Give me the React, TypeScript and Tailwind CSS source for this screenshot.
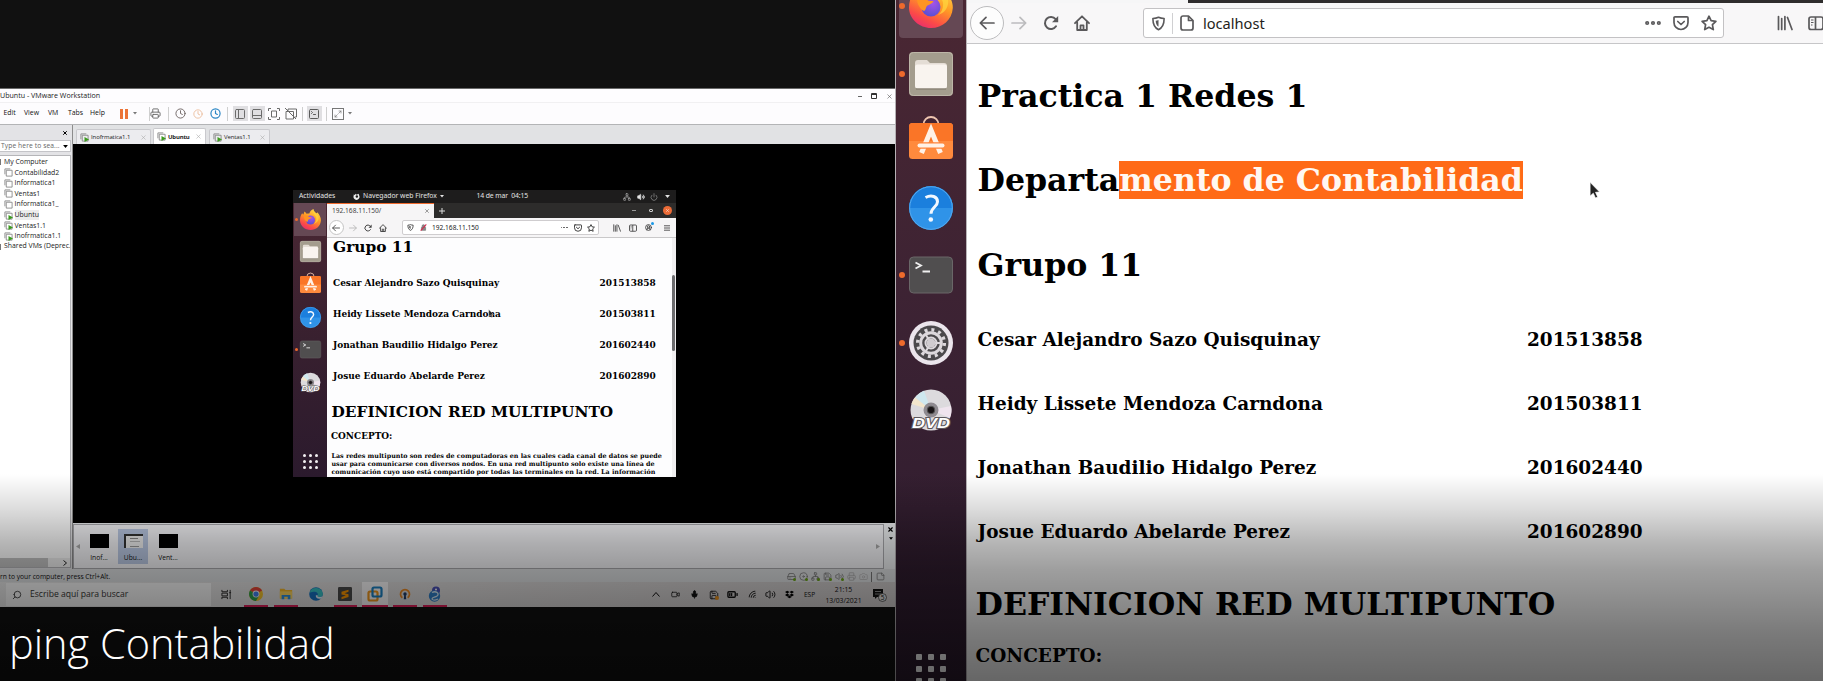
import React from "react";
import {
  AppWindow, BatteryMedium, CircleUserRound, Clock, Ellipsis, Mic, PanelBottom, PanelLeft, Power, Printer,
  Scan, Search, SquareTerminal, Video, Volume2, Wifi, X, Maximize2, HardDrive, Disc, Network, Save, Camera, StickyNote,
} from "lucide-react";
import { FaDropbox } from "react-icons/fa";

type P = { className?: string };

/* ---------- Browser glyphs ---------- */

const ArrowIcon = ({ className = "" }: P) => (
  <svg viewBox="0 0 16 16" className={className} fill="none" stroke="currentColor" strokeWidth="1.7" strokeLinecap="round" strokeLinejoin="round">
    <path d="M15 8H1.5M7 2.3 1.3 8 7 13.7" />
  </svg>
);
const ReloadIcon = ({ className = "" }: P) => (
  <svg viewBox="0 0 16 16" className={className} fill="none" stroke="currentColor" strokeWidth="2" strokeLinecap="round">
    <path d="M13 11.3A6 6 0 1 1 12.6 4.2" />
    <path d="M15.2 1v6.3H9z" fill="currentColor" stroke="none" />
  </svg>
);
const HomeIcon = ({ className = "" }: P) => (
  <svg viewBox="0 0 16 16" className={className} fill="none" stroke="currentColor" strokeWidth="1.8" strokeLinecap="round" strokeLinejoin="round">
    <path d="M1 8.2 8 1.3l7 6.9M3.2 7.5V15h9.6V7.5" />
    <path d="M6.5 15v-4.6h3V15" />
  </svg>
);
const ShieldIcon = ({ className = "" }: P) => (
  <svg viewBox="0 0 16 16" className={className} fill="none" stroke="currentColor" strokeWidth="1.7" strokeLinejoin="round">
    <path d="M8 1.4c2 .9 3.9 1.200 6 1.200 0 5.600-1.300 9.800-6 12C3.300 12.400 2 8.200 2 2.600c2.100 0 4-.3 6-1.200z" />
    <path d="M8 4.300v7.200C5.900 10 5.200 8 5 5c1 0 2-.2 3-.7z" fill="currentColor" stroke="none" />
  </svg>
);
const PageIcon = ({ className = "" }: P) => (
  <svg viewBox="0 0 14 16" className={className} fill="none" stroke="currentColor" strokeWidth="1.7" strokeLinejoin="round">
    <path d="M3 1h5.500L13 5.500V13a2 2 0 0 1-2 2H3a2 2 0 0 1-2-2V3a2 2 0 0 1 2-2z" />
    <path d="M8.500 1v4.500H13" />
  </svg>
);
const PocketIcon = ({ className = "" }: P) => (
  <svg viewBox="0 0 16 16" className={className} fill="none" stroke="currentColor" strokeWidth="1.700" strokeLinecap="round" strokeLinejoin="round">
    <path d="M2 1.800h12a1 1 0 0 1 1 1V7.500a7 7 0 0 1-14 0V2.800a1 1 0 0 1 1-1z" />
    <path d="M4.800 6.500 8 9.500l3.200-3" />
  </svg>
);
const StarIcon = ({ className = "" }: P) => (
  <svg viewBox="0 0 16 16" className={className} fill="none" stroke="currentColor" strokeWidth="1.700" strokeLinejoin="round">
    <path d="m8 1.200 2.100 4.400 4.800.7-3.500 3.400.9 4.900L8 12.300l-4.300 2.300.9-4.900L1.100 6.300l4.800-.7z" />
  </svg>
);
const LibraryIcon = ({ className = "" }: P) => (
  <svg viewBox="0 0 16 16" className={className} fill="none" stroke="currentColor" strokeWidth="1.700" strokeLinecap="round">
    <path d="M1.500 1.500v13M4.700 3.500v11M7.900 1.500v13M10.500 2.500l4.500 12" />
  </svg>
);
const SidebarIcon = ({ className = "" }: P) => (
  <svg viewBox="0 0 16 16" className={className} fill="none" stroke="currentColor" strokeWidth="1.700">
    <rect x="1" y="2" width="14" height="12.500" rx="2" />
    <path d="M7.500 2v12.500" />
    <path d="M3 5h2.500M3 7.500h2.500M3 10h1.500" strokeWidth="1" />
  </svg>
);
const Caret = ({ className = "" }: P) => (
  <svg viewBox="0 0 8 5" className={className}><path d="M0 0h8L4 5z" fill="currentColor" /></svg>
);
const Pointer = ({ className = "" }: P) => (
  <svg viewBox="0 0 10 16" className={className}>
    <path d="M1 1v12.500l2.900-2.600 2 4.400 2-.9-2-4.300 3.700-.3z" fill="#222" stroke="#fff" strokeWidth=".6" />
  </svg>
);

/* ---------- Dock icons ---------- */

const FirefoxIcon = ({ className = "" }: P) => (
  <svg viewBox="0 0 44 44" className={className}>
    <defs>
      <linearGradient id="ffx" x1=".8" y1="0" x2=".3" y2="1">
        <stop offset="0" stopColor="#ffe04a" />
        <stop offset=".45" stopColor="#ff9a25" />
        <stop offset=".8" stopColor="#fb4a48" />
        <stop offset="1" stopColor="#ea2f6c" />
      </linearGradient>
      <radialGradient id="ffxCore" cx=".6" cy=".3" r=".8">
        <stop offset="0" stopColor="#a653e8" />
        <stop offset="1" stopColor="#4f4fd0" />
      </radialGradient>
    </defs>
    <path d="M4.500 9c1 .8 1.700 2 2 3.200 1.500-1.800 2.200-4.600 2.300-7C11 6.500 13 8.500 14 10c2-.6 3.500-.8 5.500-.7C21 5.500 23.500 1.500 28.500 0c-.5 4 3 6 5.500 9 1 .2 2-.5 2-2 5 5 8 11 7.800 17C43 36 33.500 44 22 44S0 35 0 23.500C0 18 1.500 13 4.500 9z" fill="url(#ffx)" />
    <circle cx="22" cy="23" r="9.500" fill="url(#ffxCore)" />
    <path d="M8 15c4-2 9-1 11 1.500 2 .5 4 .4 5.500.7-1 2.500-4 3-6 4.300-2 1.500-1 4-3.500 5.500-4-2-7-7-7-12z" fill="#ff9422" />
    <path d="M28 3c-3 6 5 9 6 16 .6 5-1.500 9.500-5 12 7-2 11-8 10-15C38 10 30 9 28 3z" fill="#ffd43e" opacity=".75" />
  </svg>
);
const FilesIcon = ({ className = "" }: P) => (
  <svg viewBox="0 0 44 44" className={className}>
    <rect width="44" height="44" rx="4" fill="#a49d8e" />
    <rect x=".5" y=".5" width="43" height="43" rx="4" fill="none" stroke="#bdb6a8" />
    <path d="M6 11a3 3 0 0 1 3-3h9l3 3h14a3 3 0 0 1 3 3v5H6z" fill="#e4ddd5" />
    <rect x="6" y="12.500" width="32" height="24" rx="2.500" fill="#f9f4ef" />
    <path d="M7 37h30" stroke="#7f786b" />
  </svg>
);
const SoftwareIcon = ({ className = "" }: P) => (
  <svg viewBox="0 0 44 44" className={className}>
    <path d="M14.500 6.500a7.500 7.500 0 0 1 15 0" transform="translate(0 -1)" fill="none" stroke="#efc5b0" strokeWidth="1.800" />
    <rect y="4" width="44" height="36" rx="3.500" fill="#ff8a3d" />
    <path d="M0 22V7.500A3.500 3.500 0 0 1 3.500 4h37A3.500 3.500 0 0 1 44 7.500V22z" fill="#fa7527" />
    <path d="M12.500 34 22 11l9.500 23" fill="none" stroke="#fff1e6" strokeWidth="5" />
    <path d="M10.500 26.500h23" stroke="#ff8238" strokeWidth="6.500" />
    <path d="M10.500 26.500h23" stroke="#fff1e6" strokeWidth="4" strokeLinecap="round" />
  </svg>
);
const HelpIcon = ({ className = "" }: P) => (
  <svg viewBox="0 0 44 44" className={className} fill="none">
    <circle cx="22" cy="22" r="22" fill="#2f93e8" />
    <path d="M0 22a22 22 0 0 1 44 0z" fill="#1b7fdd" />
    <circle cx="22" cy="22" r="21.300" stroke="#52a8ee" />
    <path d="M16.500 11.500c6-3 12-1 12 4.200 0 5-6.500 5.800-6.500 12" stroke="#f3f8ff" strokeWidth="3" />
    <circle cx="21.800" cy="33.500" r="2.300" fill="#f3f8ff" />
  </svg>
);
const TerminalIcon = ({ className = "" }: P) => (
  <svg viewBox="0 0 44 44" className={className} fill="none">
    <rect x=".5" y="4" width="43" height="36" rx="4" fill="#504e4f" stroke="#6a6768" />
    <path d="m6.500 9.500 5.500 3-5.500 3M13.500 18.500h7.500" stroke="#f0f0f0" strokeWidth="1.800" />
  </svg>
);
const SettingsIcon = ({ className = "" }: P) => (
  <svg viewBox="0 0 44 44" className={className} fill="none">
    <circle cx="22" cy="22" r="22" fill="#ebe5ec" />
    <circle cx="22" cy="22" r="17.500" fill="#4b494c" />
    <circle cx="22" cy="22" r="13.300" stroke="#dcd8dc" strokeWidth="3.500" strokeDasharray="3 3.963" />
    <circle cx="22" cy="22" r="10.300" stroke="#dcd8dc" strokeWidth="3" />
    <circle cx="22" cy="22" r="5.500" stroke="#dcd8dc" strokeWidth="2" />
    <path d="M22 22h9M22 22l-5-8M22 22l-5 8" stroke="#dcd8dc" strokeWidth="2" />
    <circle cx="22" cy="22" r="4.500" fill="#d0ccd0" />
  </svg>
);
const DvdIcon = ({ className = "" }: P) => (
  <svg viewBox="0 0 44 44" className={className}>
    <circle cx="22" cy="22" r="20.500" fill="#dcdadd" />
    <path d="M22 22 6 9.500A20.500 20.500 0 0 1 15 2.800z" fill="#cfe8ef" />
    <path d="M22 22 2.500 16A20.500 20.500 0 0 1 6 9.500z" fill="#f3e6cc" />
    <path d="M22 22 42 18a20.500 20.500 0 0 1-1 12z" fill="#efe4ee" />
    <circle cx="22" cy="22" r="7.500" fill="#8e8a90" />
    <circle cx="22" cy="22" r="3.800" fill="#1a1518" stroke="#555" />
    <text x="22" y="39.500" textAnchor="middle" textLength="38" lengthAdjust="spacingAndGlyphs" fontFamily="Liberation Sans" fontWeight="bold" fontStyle="italic" fontSize="15" fill="#fff" stroke="#5c585c" strokeWidth="2" paintOrder="stroke">DVD</text>
  </svg>
);

/* ---------- Windows taskbar icons ---------- */

const ChromeIcon = () => (
  <svg viewBox="0 0 16 16" className="size-3.5">
    <circle cx="8" cy="8" r="8" fill="#f7c52c" />
    <path d="M8 8 1.100 4A8 8 0 0 1 14.900 4z" fill="#e8453c" />
    <path d="M8 8 1.100 4A8 8 0 0 0 8 16l3.500-6z" fill="#2fa24f" />
    <circle cx="8" cy="8" r="3.900" fill="#fff" /><circle cx="8" cy="8" r="3" fill="#4285f4" />
  </svg>
);
const ExplorerIcon = () => (
  <svg viewBox="0 0 16 16" className="size-3.5">
    <path d="M1 2h5l1.500 1.500H15V13H1z" fill="#f6b92c" /><path d="M1 5h14v8H1z" fill="#ffd75e" />
    <path d="M3 14V9h10v5h-3v-3H6v3z" fill="#2d8fe0" />
  </svg>
);
const EdgeIcon = () => (
  <svg viewBox="0 0 16 16" className="size-3.5">
    <circle cx="8" cy="8" r="7.800" fill="#1673c4" />
    <path d="M.5 7A7.800 7.800 0 0 1 15.800 8c0 2.500-2 3.500-4 3.500S9 10.500 10 9.500C11 7 8 5 5 5.500 3 5.700 1.500 6 .5 7z" fill="#38c4c8" />
    <path d="M10 9.500c-.8 1 0 2 1.800 2s3-.5 4-1.500l-1.500 3c-4 1.500-7-.5-6.500-3.500z" fill="#e6f3fa" />
  </svg>
);
const SublimeIcon = () => (
  <svg viewBox="0 0 16 16" className="size-3.5">
    <rect width="16" height="16" rx="1.500" fill="#4a4a4a" />
    <path d="M12 3 4 5.500v3l5 1.300-5 1.700V14l8-2.700v-3L7.500 7 12 5.500z" fill="#ff9800" />
  </svg>
);
const VmwareIcon = () => (
  <svg viewBox="0 0 16 16" className="size-4" fill="none" strokeWidth="2.200">
    <rect x="1.500" y="5.500" width="9" height="9" rx="1.500" stroke="#f39a1f" />
    <rect x="5.500" y="1.500" width="9" height="9" rx="1.500" stroke="#1c83c6" />
  </svg>
);
const VpnIcon = () => (
  <svg viewBox="0 0 16 16" className="size-3" fill="none">
    <path d="M4.500 13A6 6 0 1 1 11.500 13" stroke="#ee8a22" strokeWidth="2.300" />
    <circle cx="8" cy="8" r="2.300" fill="#1e3a68" /><path d="M7 9h2l.6 6H6.400z" fill="#1e3a68" />
  </svg>
);
const PythonIcon = () => (
  <svg viewBox="0 0 16 16" className="size-4">
    <circle cx="9" cy="4.500" r="4" fill="#4b52b8" /><circle cx="7.500" cy="10" r="5.700" fill="#2f7fc8" />
    <path d="M5 6.500c4-2 8 1 5 3.500-2 1.500-5 1-5 3 1 1.500 4 1 6 0" fill="none" stroke="#d7e8f7" strokeWidth="1.300" />
    <circle cx="9" cy="3.500" r="1" fill="#fff" />
  </svg>
);
const TaskViewIcon = () => (
  <svg viewBox="0 0 12 12" className="size-[11px]" fill="none" stroke="#222" strokeWidth="1">
    <path d="M1 1v2h6V1M1 11V9h6v2M1 4.500h6v3H1zM10 1v10" /><path d="M9 4h2" />
  </svg>
);

/* ---------- Shared pieces ---------- */

const DOCK = [FirefoxIcon, FilesIcon, SoftwareIcon, HelpIcon, TerminalIcon, SettingsIcon, DvdIcon];

function BigDock() {
  const running = [true, true, false, false, true, true, false];
  return (
    <div className="flex h-full w-[70px] shrink-0 flex-col overflow-hidden bg-linear-to-b from-[#4a2733] via-[#3b2233] to-[#2b1a2d]">
      <div className="-mt-[27px] flex flex-col">
        {DOCK.map((Icon, i) => (
          <div key={i} className={"flex h-[67.2px] items-center pl-[3px] " + (i === 0 ? "mx-[3px] !h-[65px] mb-[2.200px] rounded bg-[#654854] !pl-0" : "")}>
            <span className={"size-1.5 shrink-0 rounded-full " + (running[i] ? "bg-[#ee6a2c]" : "")} />
            <Icon className="ml-1 size-11 overflow-visible" />
          </div>
        ))}
      </div>
      <div className="mt-[211px] grid w-[30px] shrink-0 grid-cols-3 gap-1.5 self-center">
        {Array.from({ length: 9 }, (_, i) => <span key={i} className="size-1.5 rounded-[1px] bg-white" />)}
      </div>
    </div>
  );
}

function SmallDock() {
  const icons = [FirefoxIcon, FilesIcon, SoftwareIcon, HelpIcon, TerminalIcon, DvdIcon];
  return (
    <div className="flex h-full w-[34px] shrink-0 flex-col bg-linear-to-b from-[#4a2733] via-[#38202f] to-[#2b1a2d]">
      {icons.map((Icon, i) => (
        <div key={i} className={"flex h-[32.600px] items-center pl-0.5 " + (i === 0 ? "mx-px bg-[#654854] !pl-px" : "")}>
          <span className={"size-[3px] shrink-0 rounded-full " + (i === 0 || i === 4 ? "bg-[#ee6a2c]" : "")} />
          <Icon className="ml-[1.500px] size-[21px] overflow-visible" />
        </div>
      ))}
      <div className="mt-[55px] grid w-[15px] grid-cols-3 gap-[3px] self-center">
        {Array.from({ length: 9 }, (_, i) => <span key={i} className="size-[3px] rounded-full bg-[#f2f0f2]" />)}
      </div>
    </div>
  );
}

const PEOPLE = [
  ["Cesar Alejandro Sazo Quisquinay", "201513858"],
  ["Heidy Lissete Mendoza Carndona", "201503811"],
  ["Jonathan Baudilio Hidalgo Perez", "201602440"],
  ["Josue Eduardo Abelarde Perez", "201602890"],
];

/* ---------- Nested Firefox inside the virtual machine ---------- */

function NestedDesktop() {
  return (
    <div className="flex h-[287px] w-[383px] flex-col overflow-hidden bg-[#1d1c1c] font-['Noto_Sans',sans-serif]">
      <div className="flex h-[13px] shrink-0 items-center text-[6.800px] leading-none whitespace-nowrap text-[#e4e4e4]">
        <span className="ml-1.5 w-[54px]">Actividades</span>
        <svg viewBox="0 0 10 10" className="size-[7px] shrink-0"><path d="M1 2 2.500 3 4 1l1 1.500L8 1l1 3a4.300 4.300 0 1 1-8 0z" fill="#eee" /><circle cx="5.500" cy="5" r="1.700" fill="#1d1c1c" /></svg>
        <span className="ml-[3px] w-[75.500px]">Navegador web Firefox</span>
        <Caret className="ml-px h-[2.500px] w-1" />
        <span className="ml-[33px] w-[146px] tracking-[-0.1px]">14 de mar&nbsp; 04:15</span>
        <Network className="size-2 text-[#aaa]" />
        <Volume2 className="ml-1.5 size-2" fill="currentColor" />
        <Power className="ml-[5px] size-2 text-[#999]" />
        <Caret className="ml-[7px] h-[3px] w-[5px]" />
      </div>
      <div className="flex min-h-0 flex-1">
        <SmallDock />
        <div className="flex min-w-0 flex-1 flex-col">
          <div className="flex h-[15px] shrink-0 items-center bg-[#2d2c2b] text-[#ddd]">
            <div className="flex h-full w-[107px] items-center border-t border-[#ef6a2e] bg-[#f6f5f6] pl-[5px] text-[6.600px] text-[#444]">
              <span className="w-[92px]">192.168.11.150/</span>
              <X className="size-1.5" />
            </div>
            <svg viewBox="0 0 6 6" className="ml-[5px] size-1.5"><path d="M3 0v6M0 3h6" stroke="#ddd" /></svg>
            <span className="ml-[187px] h-px w-1 bg-[#999]" />
            <span className="ml-[13px] size-[3.500px] rounded-[1px] border border-[#ccc]" />
            <span className="ml-[10px] flex size-[9px] items-center justify-center rounded-full bg-[#ec6b36]"><X className="size-[5px] text-white" /></span>
          </div>
          <div className="flex h-5 shrink-0 items-center border-b border-[#c9c8c9] bg-[#f6f5f6] text-[#3f3f3f]">
            <span className="ml-[1.500px] flex size-[15px] shrink-0 items-center justify-center rounded-full border border-[#c4c4c4] bg-white"><ArrowIcon className="size-2" /></span>
            <ArrowIcon className="ml-[5px] size-2 shrink-0 rotate-180 text-[#b5b5b5]" />
            <ReloadIcon className="ml-[7.500px] size-2 shrink-0" />
            <HomeIcon className="ml-[7px] size-2 shrink-0" />
            <div className="ml-[15px] flex h-[15px] w-[197px] shrink-0 items-center rounded-[2px] border border-[#cfcdcf] bg-white text-[6.600px] text-[#222]">
              <ShieldIcon className="ml-1 size-[7px]" />
              <svg viewBox="0 0 10 10" className="ml-1.5 size-[7px]"><path d="M2 5h6v4H2zM3 5V3a2 2 0 0 1 4 0v2" fill="#888" stroke="#777" /><path d="M1 9.500 9 .5" stroke="#d8284c" strokeWidth="1.500" /></svg>
              <span className="ml-[5px] w-[128.500px]">192.168.11.150</span>
              <span className="flex w-[9px] gap-px"><i className="size-[1.700px] rounded-full bg-[#555]" /><i className="size-[1.700px] rounded-full bg-[#555]" /><i className="size-[1.700px] rounded-full bg-[#555]" /></span>
              <PocketIcon className="ml-1 size-2 shrink-0" />
              <StarIcon className="ml-[5px] size-2 shrink-0" />
            </div>
            <LibraryIcon className="ml-3.5 size-2 shrink-0" />
            <SidebarIcon className="ml-2 size-2 shrink-0" />
            <span className="relative ml-2 size-[7px]">
              <CircleUserRound className="size-[7px]" strokeWidth={3} />
              <i className="absolute -top-0.5 -right-0.5 size-[3px] rounded-full bg-[#1a98e6]" />
            </span>
            <svg viewBox="0 0 6 6" className="ml-3 size-1.5"><path d="M0 .8h6M0 3h6M0 5.200h6" stroke="#444" strokeWidth=".9" /></svg>
          </div>
          <div className="relative flex min-h-0 flex-1 overflow-hidden bg-[#fdfdfe] font-['DejaVu_Serif',serif] font-bold text-black">
            <div className="flex w-[344px] shrink-0 flex-col whitespace-nowrap">
              <div className="ml-1.5 h-[18px] text-[15.400px] leading-[18px]">Grupo 11</div>
              <div className="mt-[21px] ml-[6px] flex flex-col">
                {PEOPLE.map(([n, id]) => (
                  <div key={id} className="flex h-[31px] items-start text-[8.970px] leading-3">
                    <span className="w-[266.500px]">{n}</span><span>{id}</span>
                  </div>
                ))}
              </div>
              <div className="mt-[2px] ml-[4.500px] h-[18px] text-[15.350px] leading-[18px]">DEFINICION RED MULTIPUNTO</div>
              <div className="mt-[9px] ml-1 text-[8.940px] leading-3">CONCEPTO:</div>
              <div className="mt-2.5 ml-[4.500px] text-[6.370px] leading-[8.100px]">
                <div>Las redes multipunto son redes de computadoras en las cuales cada canal de datos se puede</div>
                <div>usar para comunicarse con diversos nodos. En una red multipunto solo existe una línea de</div>
                <div>comunicación cuyo uso está compartido por todas las terminales en la red. La información</div>
              </div>
            </div>
            <div className="ml-px h-full w-1 bg-[#f0eff0]"><div className="mt-[37px] h-[76px] w-[3px] rounded bg-[#6b6b6d]" /></div>
            <Pointer className="absolute top-[71px] left-[161px] h-[9px] w-[6px]" />
          </div>
        </div>
      </div>
    </div>
  );
}

/* ---------- VMware Workstation ---------- */

const VmIcon = ({ on = false }: { on?: boolean }) => (
  <svg viewBox="0 0 10 10" className="size-[9px] shrink-0" fill="none" stroke="#7d7d7d" strokeWidth=".9">
    <path d="M1 7V1h6M2.500 2.500H9V9H2.500z" />
    {on && <path d="M5 4.500 10 7.300 5 10z" fill="#3c9a1e" stroke="none" />}
  </svg>
);
const Sep = ({ className = "" }: P) => <span className={"h-3.5 w-px shrink-0 bg-[#cfcfcf] " + className} />;

function Toolbar() {
  return (
    <div className="flex h-[21px] shrink-0 items-center bg-[#fdfcfe] text-[6.900px] leading-none text-[#111]">
      <span className="ml-[3.500px] w-[20.500px]">Edit</span>
      <span className="w-6">View</span>
      <span className="w-5">VM</span>
      <span className="w-[22px]">Tabs</span>
      <span className="w-[29.500px]">Help</span>
      <span className="flex gap-0.5"><i className="h-2.5 w-[3px] bg-[#ec7437]" /><i className="h-2.5 w-[3px] bg-[#ec7437]" /></span>
      <Caret className="ml-[5px] h-[2.500px] w-1 text-[#777]" />
      <Sep className="ml-3" />
      <Printer className="size-[11px] text-[#666]" />
      <Sep className="ml-[7px]" />
      <Clock className="ml-1.5 size-[11px] text-[#6b6160]" />
      <Clock className="ml-[7px] size-2.5 text-[#eab996]" />
      <Clock className="ml-[7px] size-[11px] text-[#2a86c4]" strokeWidth={2.600} />
      <Sep className="ml-1.5" />
      <span className="ml-[5px] flex size-[15px] items-center justify-center bg-[#e0dfe2] text-[#6b6b6b]"><PanelLeft className="size-3" /></span>
      <span className="ml-0.5 flex size-[15px] items-center justify-center bg-[#e0dfe2] text-[#6b6b6b]"><PanelBottom className="size-3" /></span>
      <span className="ml-[3px] flex size-3 items-center justify-center text-[#6b6b6b]">
        <svg viewBox="0 0 12 12" className="size-3" fill="none" stroke="currentColor"><path d="M.5 3V.5H3M9 .5h2.500V3M11.500 9v2.500H9M3 11.500H.500V9M3.500 3h5v6h-5z" /></svg>
      </span>
      <span className="ml-[5px] flex size-3 items-center justify-center text-[#6b6b6b]">
        <svg viewBox="0 0 12 12" className="size-3" fill="none" stroke="currentColor"><path d="M3 3V1h8.500v8H9.500M1 3.500h7.500V11H1zM0 0l11 11" /></svg>
      </span>
      <Sep className="ml-[5px]" />
      <span className="ml-1 flex size-[15px] items-center justify-center bg-[#e0dfe2] text-[#5b5b5b]"><SquareTerminal className="size-3" /></span>
      <Sep className="ml-1" />
      <span className="ml-[5px] flex size-3 items-center justify-center border border-[#777]"><Maximize2 className="size-2 text-[#777]" /></span>
      <Caret className="ml-1 h-[2.500px] w-1 text-[#777]" />
    </div>
  );
}

const MACHINES: [string, boolean][] = [
  ["Contabilidad2", false], ["Informatica1", false], ["Ventas1", false], ["Informatica1_", false],
  ["Ubuntu", true], ["Ventas1.1", true], ["Inofrmatica1.1", true],
];

function LibraryPane() {
  return (
    <div className="flex w-[73px] shrink-0 flex-col overflow-hidden border-r border-[#8c8c8c] bg-[#e3e3e6] whitespace-nowrap">
      <div className="flex h-[15px] items-center justify-end pr-1"><X className="size-1.5 text-black" strokeWidth={4} /></div>
      <div className="flex h-3 w-[71px] items-center border border-l-0 border-[#c4c4c8] bg-white pl-px text-[6.700px] leading-none text-[#666]">
        <span className="w-[62px] tracking-[0.100px]">Type here to sea...</span>
        <Caret className="h-[3px] w-[5px] text-black" />
      </div>
      <div className="mt-[3px] flex w-[71px] flex-1 flex-col border border-l-0 border-[#b5b5b8] bg-white text-[6.900px] text-[#222]">
        <div className="mt-px flex h-[10.550px] items-center"><i className="mr-[3px] h-1.5 w-px bg-[#777]" />My Computer</div>
        {MACHINES.map(([name, on]) => (
          <div key={name} className="flex h-[10.550px] items-center pl-[3.500px]">
            <VmIcon on={on} />
            <span className={"ml-0.5 leading-[10px] " + (name === "Ubuntu" ? "bg-[#ececec]" : "")}>{name}</span>
          </div>
        ))}
        <div className="flex h-[10.550px] items-center overflow-hidden"><i className="mr-[3px] h-1.5 w-px shrink-0 bg-[#777]" />Shared VMs (Deprec.</div>
        <div className="mt-auto flex h-[9px] items-center justify-between bg-[#f0f0f0] pr-[3px]">
          <span className="h-full w-12 bg-[#c2c2c2]" />
          <svg viewBox="0 0 4 6" className="h-1.5 w-1"><path d="m.5.5 3 2.500-3 2.500" fill="none" stroke="#222" /></svg>
        </div>
      </div>
      <div className="h-px" />
    </div>
  );
}

function VmTab({ name, active, className }: { name: string; active?: boolean; className: string }) {
  return (
    <div className={"flex items-center rounded-t-[2px] border border-b-0 border-[#c9c9cd] pr-[3px] pl-[3px] text-[6px] leading-none text-[#222] " + (active ? "bg-white font-bold h-4 " : "bg-[#ececef] h-[15px] ") + className}>
      <VmIcon on /><span className={active ? "ml-0.5 tracking-[-0.2px]" : "ml-0.5 tracking-[-0.1px]"}>{name}</span><X className="ml-auto size-[7px] shrink-0 text-[#aaa]" />
    </div>
  );
}

function Thumb({ name, selected, className = "" }: { name: string; selected?: boolean; className?: string }) {
  return (
    <div className={"flex h-[35px] w-[30px] flex-col items-center pt-[5px] text-[6.700px] leading-none text-[#111] " + (selected ? "bg-[#b9c7e2] " : "") + className}>
      {selected ? (
        <div className="flex h-3.5 w-[19px] flex-col border-t-2 border-l-2 border-[#333] bg-[#f1f1f1] px-1 pt-0.5">
          <i className="h-px w-2 bg-[#888]" /><i className="mt-0.5 h-px w-2.5 bg-[#bbb]" /><i className="mt-1 h-px w-[9px] bg-[#999]" />
        </div>
      ) : (
        <div className="h-3.5 w-[19px] bg-black" />
      )}
      <span className="mt-[7px]">{name}</span>
    </div>
  );
}

function VMware() {
  return (
    <div className="flex h-[494px] shrink-0 flex-col border-t border-[#6a6a6a] bg-[#e3e3e6]">
      <div className="flex h-[14px] shrink-0 items-center border-b border-[#f1f0f2] bg-[#fefdff] pt-px text-[7.100px] leading-none text-[#222]">
        <span className="whitespace-nowrap">Ubuntu - VMware Workstation</span>
        <span className="ml-auto h-px w-1 bg-[#666]" />
        <span className="ml-[9px] size-1.5 rounded-[1px] border border-t-2 border-[#333]" />
        <X className="mr-0.5 ml-[9px] size-[7px] text-[#555]" />
      </div>
      <Toolbar />
      <div className="flex min-h-0 flex-1 border-t border-[#b3b4b6]">
        <LibraryPane />
        <div className="flex min-w-0 flex-1 flex-col">
          <div className="flex h-[19px] shrink-0 items-end bg-[#e1e2e4]">
            <VmTab name="Inofrmatica1.1" className="ml-[3px] w-[75px]" />
            <VmTab name="Ubuntu" active className="ml-0.5 w-[53px]" />
            <VmTab name="Ventas1.1" className="ml-[3px] w-[61px]" />
          </div>
          <div className="h-[379px] shrink-0 bg-black pt-[46px] pl-[220px]"><NestedDesktop /></div>
          <div className="flex flex-1 bg-[#eef0f2]">
            <div className="mt-px flex w-[811px] items-center border border-[#a9a9ad] bg-[#f5f5f8]">
              <svg viewBox="0 0 4 5" className="ml-0.5 h-[5px] w-1"><path d="M4 0v5L0 2.500z" fill="#aaa" /></svg>
              <Thumb name="Inof..." className="ml-[4px]" />
              <Thumb name="Ubu..." selected className="ml-[4px]" />
              <Thumb name="Vent..." className="ml-[5px]" />
              <svg viewBox="0 0 4 5" className="mr-[3px] ml-auto h-[5px] w-1"><path d="M0 0v5l4-2.500z" fill="#aaa" /></svg>
            </div>
            <div className="flex flex-col items-center pt-[3px] pl-[3px]"><X className="size-[7px] text-black" strokeWidth={4} /><Caret className="mt-1 h-[3px] w-1" /></div>
          </div>
        </div>
      </div>
      <div className="flex h-[13px] shrink-0 items-center bg-[#dfe1e3] pt-[2px] text-[6.700px] leading-none text-[#111]">
        <span className="pt-px whitespace-nowrap">rn to your computer, press Ctrl+Alt.</span>
        <div className="mr-[10px] ml-auto flex items-center gap-[3px] text-[#777]">
          {[HardDrive, Disc, Network, Save, Volume2].map((Icon, i) => (
            <span key={i} className="relative"><Icon className="size-[9px]" /><i className="absolute right-0 bottom-0 size-[3px] rounded-full bg-[#6aa512]" /></span>
          ))}
          <Printer className="size-[9px] text-[#aaa]" /><Camera className="size-[9px] text-[#b5b5b5]" />
          <span className="h-2.5 w-px bg-[#777]" /><StickyNote className="ml-px size-[9px]" />
        </div>
      </div>
    </div>
  );
}

function Taskbar() {
  const apps = [ChromeIcon, ExplorerIcon, EdgeIcon, SublimeIcon, VmwareIcon, VpnIcon, PythonIcon];
  return (
    <div className="flex h-[25px] shrink-0 items-center bg-linear-to-r from-[#ebebeb] to-[#cfcbcb] text-[#111]">
      <div className="ml-1.5 flex h-[23px] w-[205px] items-center bg-[#fafafa] text-[8.600px] text-[#333]">
        <Search className="ml-1.5 size-2.5 -scale-x-100" /><span className="ml-2">Escribe aquí para buscar</span>
      </div>
      <div className="flex w-[30px] justify-center"><TaskViewIcon /></div>
      {apps.map((Icon, i) => (
        <div key={i} className={"flex h-full w-[29.850px] flex-col items-center " + (i === 4 ? "px-0.5" : "px-[3px]")}>
          <div className={"flex w-full flex-1 items-center justify-center " + (i === 4 ? "bg-[#fdfcfd]" : "")}><Icon /></div>
          <span className={"h-0.5 w-full " + (i === 2 ? "" : "bg-[#e0205a]")} />
        </div>
      ))}
      <div className="ml-auto flex items-center">
        <svg viewBox="0 0 8 5" className="h-[5px] w-2"><path d="m.5 4.500 3.500-4 3.500 4" fill="none" stroke="#111" /></svg>
        <Video className="ml-[11px] size-[9px]" />
        <Mic className="ml-2.5 size-[9px]" fill="currentColor" />
        <span className="relative ml-2.5"><Save className="size-2.5" /><i className="absolute right-0 bottom-0 size-1 rounded-full bg-[#ee951d]" /></span>
        <BatteryMedium className="ml-[8px] size-[11px]" strokeWidth={3} />
        <Wifi className="ml-[10px] size-2.5 rotate-[-45deg]" />
        <Volume2 className="ml-[7px] size-[11px]" />
        <FaDropbox className="ml-[9px] size-[9px] text-black" />
        <span className="ml-2.5 w-[13px] text-[6.500px]">ESP</span>
        <span className="ml-2 flex w-[37px] flex-col items-center gap-1 text-[6.800px] leading-[7px]"><span>21:15</span><span>13/03/2021</span></span>
        <span className="relative mr-[8px] ml-[11px] h-[15px] w-[14px]">
          <svg viewBox="0 0 14 15" className="h-[15px] w-[14px]">
            <path d="M0 2h10v8H4L2 12v-2H0z" fill="#111" /><path d="M2 4.500h6M2 7h6" stroke="#aaa" strokeWidth=".8" />
            <circle cx="9.500" cy="10.500" r="4" fill="#ddd" stroke="#333" strokeWidth=".7" />
            <text x="9.500" y="13" textAnchor="middle" fontFamily="Open Sans" fontSize="6.500" fill="#111">5</text>
          </svg>
        </span>
      </div>
    </div>
  );
}

/* ---------- Right-hand browser ---------- */

function Browser() {
  return (
    <div className="flex min-w-0 flex-1 flex-col border-l border-[#b9b5b8]">
      <div className="flex h-[3px] shrink-0 bg-[#f6f6f7]"><div className="ml-[221px] flex-1 bg-[#2f2d2d]" /></div>
      <div className="flex h-[41px] shrink-0 items-center border-b border-[#c6c6c8] bg-[#f8f7f8] text-[#5a595b]">
        <span className="ml-[3px] flex size-[34px] shrink-0 items-center justify-center rounded-full border border-[#bcbcbe] bg-[#fdfdfd]"><ArrowIcon className="size-4" /></span>
        <ArrowIcon className="ml-[7px] size-4 shrink-0 rotate-180 text-[#bcbcbe]" />
        <ReloadIcon className="ml-4 size-4 shrink-0" />
        <HomeIcon className="ml-[15px] size-4 shrink-0" />
        <div className="ml-[53px] flex h-[30px] w-[581px] shrink-0 items-center rounded-[3px] border border-[#c3c2c4] bg-white">
          <ShieldIcon className="ml-[7px] size-[15px]" />
          <span className="ml-1.5 h-[21px] w-px bg-[#d0d0d2]" />
          <PageIcon className="ml-[7px] h-4 w-3.5" />
          <span className="ml-[9px] w-[441px] pt-px font-['Noto_Sans',sans-serif] text-[14.600px] leading-none text-[#1e1e20]">localhost</span>
          <Ellipsis className="-ml-px size-5 shrink-0" strokeWidth={3} />
          <PocketIcon className="ml-2.5 size-4 shrink-0" />
          <StarIcon className="ml-3 size-4 shrink-0" />
        </div>
        <LibraryIcon className="ml-[53px] size-4 shrink-0" />
        <SidebarIcon className="ml-[15px] size-4 shrink-0" />
      </div>
      <div className="relative flex flex-1 flex-col overflow-hidden bg-white pl-[10.500px] font-['DejaVu_Serif',serif] font-bold whitespace-nowrap text-black">
        <h1 className="mt-[33px] h-[38px] text-[31.620px] leading-[38px]">Practica 1 Redes 1</h1>
        <h1 className="mt-[46px] flex h-[38px] text-[31.620px] leading-[38px]">
          Departa<span className="bg-[#ff6a17] text-[#fff8f2]">mento de Contabilidad</span>
        </h1>
        <h1 className="mt-[47px] h-[38px] text-[31.620px] leading-[38px]">Grupo 11</h1>
        <div className="mt-[45px] flex flex-col gap-[42px]">
          {PEOPLE.map(([n, id]) => (
            <div key={id} className="flex h-[22px] text-[18.470px] leading-[22px]"><span className="w-[549.500px]">{n}</span><span>{id}</span></div>
          ))}
        </div>
        <h1 className="mt-[42px] -ml-0.5 h-[38px] text-[31.580px] leading-[38px]">DEFINICION RED MULTIPUNTO</h1>
        <h3 className="mt-[22px] -ml-0.5 h-[22px] text-[18.470px] leading-[22px]">CONCEPTO:</h3>
        <Pointer className="absolute top-[137px] left-[621.500px] h-[18px] w-[11px]" />
      </div>
    </div>
  );
}

export default function App() {
  return (
    <div className="relative flex h-[681px] w-[1823px] overflow-hidden bg-black font-['Open_Sans',sans-serif]">
      <div className="flex w-[895px] shrink-0 flex-col overflow-hidden bg-[#111111]">
        <div className="h-[88px] shrink-0" />
        <VMware />
        <Taskbar />
      </div>
      <div className="w-px shrink-0 bg-[#b5b1b4]" />
      <BigDock />
      <Browser />
      <div className="pointer-events-none absolute inset-x-0 top-[474px] bottom-0 bg-[linear-gradient(to_bottom,rgba(0,0,0,0)_0px,rgba(0,0,0,.14)_36px,rgba(0,0,0,.29)_69px,rgba(0,0,0,.38)_96px,rgba(0,0,0,.52)_159px,rgba(0,0,0,.6)_207px)]" />
      <div className="absolute top-[615px] left-[9px] text-[41.500px] leading-[56px] font-light whitespace-nowrap text-white">ping Contabilidad</div>
    </div>
  );
}
